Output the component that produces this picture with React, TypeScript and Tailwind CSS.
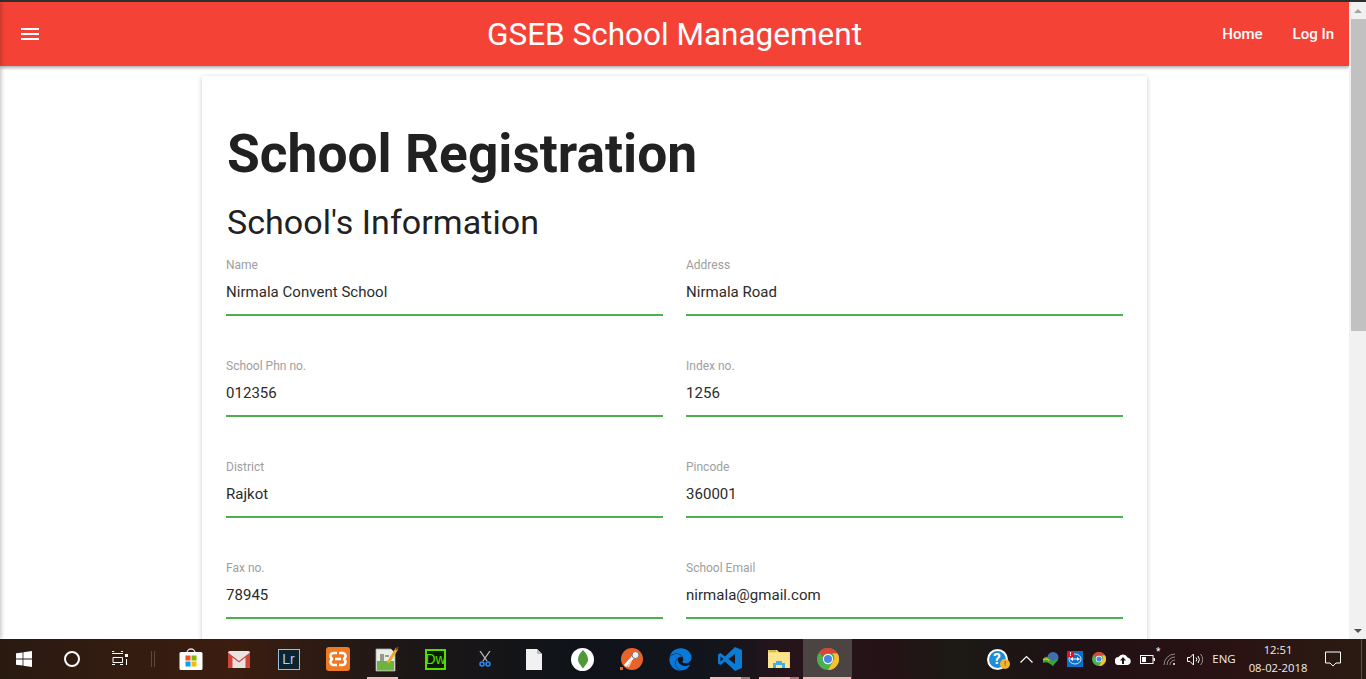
import React from "react";
import { FaEdge } from "react-icons/fa";

const fields = [
  ["Name", "Nirmala Convent School", "Address", "Nirmala Road"],
  ["School Phn no.", "012356", "Index no.", "1256"],
  ["District", "Rajkot", "Pincode", "360001"],
  ["Fax no.", "78945", "School Email", "nirmala@gmail.com"],
];

function Field({ label, value }: { label: string; value: string }) {
  return (
    <div className="flex-1 h-[101px]">
      <div className="text-[12px] leading-[14px] text-[#9e9e9e]">{label}</div>
      <div className="mt-[5px] h-[30px] text-[15px] leading-[30px] text-[#2b2b2b] tracking-[0.03px]">
        {value}
      </div>
      <div className="mt-[7px] h-[2px] bg-[#4caf50]" />
    </div>
  );
}

function Chrome({ size }: { size: number }) {
  return (
    <svg width={size} height={size} viewBox="0 0 24 24">
      <circle cx="12" cy="12" r="12" fill="#4caf50" />
      <path d="M12 0a12 12 0 0 1 10.4 6H12a6 6 0 0 0-5.6 3.8L2.4 4.8A12 12 0 0 1 12 0z" fill="#db4437" />
      <path d="M22.4 6A12 12 0 0 1 12 24l5.2-9a6 6 0 0 0-.6-9z" fill="#fbc02d" />
      <circle cx="12" cy="12" r="5.6" fill="#fff" />
      <circle cx="12" cy="12" r="4.4" fill="#4a86e8" />
    </svg>
  );
}

function Slot({ children, mark, active }: { children: React.ReactNode; mark?: "single" | "double"; active?: boolean }) {
  return (
    <div className={`relative w-[49px] h-full flex items-center justify-center ${active ? "bg-[#4c4443]" : ""}`}>
      {children}
      {mark && (
        <div className="absolute left-[5px] bottom-0 h-[2px] flex w-[40px]">
          <div className="w-[31px] bg-[#f8b5bc]" />
          {mark === "double" && <div className="w-[9px] bg-[#a9767d]" />}
        </div>
      )}
      {active && <div className="absolute left-0 right-[1px] bottom-0 h-[2px] bg-[#f8b5bc]" />}
    </div>
  );
}

function Taskbar() {
  return (
    <div className="h-[40px] shrink-0 flex items-center text-white bg-[linear-gradient(90deg,#291a10_0%,#3c1d10_17%,#1c1716_30%,#0f1319_42%,#12151c_52%,#27141a_58%,#241216_65%,#1b1a14_70%,#1f1115_78%,#2a1212_90%,#2a1c12_100%)]">
      <div className="w-[48px] flex justify-center">
        <svg width="16" height="16" viewBox="0 0 16 16" fill="#fff">
          <path d="M0 2.3 6.6 1.4V7.6H0zM7.4 1.3 16 0V7.6H7.4zM0 8.4H6.6V14.6L0 13.7zM7.4 8.4H16V16L7.4 14.7z" />
        </svg>
      </div>
      <div className="w-[48px] flex justify-center">
        <div className="w-[16px] h-[16px] rounded-full border-[2px] border-white" />
      </div>
      <div className="w-[48px] flex justify-center">
        <svg width="16" height="16" viewBox="0 0 16 16" fill="none" stroke="#fff">
          <path d="M0 .5H2M11 .5H9M2 .5V1M0 2.5H11M1 6.5H10.5V11.5H1ZM0 13.5H3M8 13.5H11" />
          <rect x="13" y="3" width="3" height="3" fill="#fff" stroke="none" />
          <rect x="14" y="8" width="1" height="6" fill="#fff" stroke="none" />
        </svg>
      </div>
      <div className="w-[22px] flex justify-center gap-[2px] pr-[5px]">
        <div className="w-px h-[16px] bg-[#5b4a42]" />
        <div className="w-px h-[16px] bg-[#5b4a42]" />
      </div>
      <Slot>
        <svg width="24" height="24" viewBox="0 0 24 24">
          <path d="M8 6a4 4 0 0 1 8 0" fill="none" stroke="#ddd" strokeWidth="1.4" />
          <rect x="0.5" y="5" width="23" height="18" rx="1.5" fill="#fff" />
          <rect x="6.5" y="8.5" width="5" height="5" fill="#f25022" />
          <rect x="12.5" y="8.5" width="5" height="5" fill="#7fba00" />
          <rect x="6.5" y="14.5" width="5" height="5" fill="#00a4ef" />
          <rect x="12.5" y="14.5" width="5" height="5" fill="#ffb900" />
        </svg>
      </Slot>
      <Slot>
        <svg width="22" height="17" viewBox="0 0 22 17" className="mr-[1px]">
          <rect width="22" height="17" rx="1.5" fill="#e8e3e0" />
          <path d="M0 1.5 11 10 22 1.5V15.5a1.5 1.5 0 0 1-1.5 1.5H17.5V6.5L11 11.5 4.500 6.500V17H1.500A1.500 1.500 0 0 1 0 15.500z" fill="#d2443a" />
        </svg>
      </Slot>
      <Slot>
        <div className="w-[22px] h-[21px] bg-[#0c2330] border border-[#9cc0da] flex items-center justify-center text-[14px] leading-none text-[#a9d2ee] font-['Liberation_Sans',sans-serif]">
          Lr
        </div>
      </Slot>
      <Slot>
        <div className="w-[24px] h-[24px] rounded-[3px] bg-[#ee7a24] flex items-center justify-center">
          <svg width="18" height="16" viewBox="0 0 18 16" fill="none" stroke="#fff" strokeWidth="2.600">
            <path d="M8 2H5a2.500 2.500 0 0 0-1 6 2.500 2.500 0 0 0 1 6H8M10 2H13a2.500 2.500 0 0 1 1 6 2.500 2.500 0 0 1-1 6H10M6 8H12" />
          </svg>
        </div>
      </Slot>
      <Slot mark="single">
        <svg width="24" height="25" viewBox="0 0 24 25">
          <path d="M1 2H16L20 6V24H1Z" fill="#e9efe4" stroke="#aaa" strokeWidth="0.8" />
          <rect x="2" y="14" width="17" height="9.500" fill="#6cb33f" />
          <path d="M6 7V14M8 7V14M10 9H14" stroke="#444" strokeWidth="1" />
          <path d="M13 16 22 1.500" stroke="#e8a92c" strokeWidth="3" />
          <path d="M21 3 23 0" stroke="#8b3a2a" strokeWidth="2" />
        </svg>
      </Slot>
      <Slot>
        <div className="w-[21px] h-[21px] bg-[#0b1a05] border-2 border-[#52e000] flex items-center justify-center text-[14px] leading-none text-[#52e000] font-['Liberation_Sans',sans-serif]">
          Dw
        </div>
      </Slot>
      <Slot>
        <svg width="12" height="16" viewBox="0 0 12 16" fill="none">
          <path d="M1 0 8 10M11 0 4 10" stroke="#bbb" strokeWidth="1.300" />
          <circle cx="3" cy="13" r="2" stroke="#1e90ff" strokeWidth="1.500" />
          <circle cx="9" cy="13" r="2" stroke="#1e90ff" strokeWidth="1.500" />
        </svg>
      </Slot>
      <Slot>
        <svg width="16" height="21" viewBox="0 0 16 21">
          <path d="M0 0H11L16 5V21H0Z" fill="#f1f1f1" />
          <path d="M11 0V5H16Z" fill="#bbb" />
        </svg>
      </Slot>
      <Slot>
        <div className="w-[23px] h-[23px] rounded-full bg-white flex items-center justify-center">
          <svg width="10" height="18" viewBox="0 0 10 18">
            <path d="M5 0C8 3 10 6 10 9.500 10 13 7 15 5.500 18H4.500C3 15 0 13 0 9.500 0 6 2 3 5 0Z" fill="#4e9a3a" />
          </svg>
        </div>
      </Slot>
      <Slot>
        <svg width="23" height="23" viewBox="0 0 23 23">
          <circle cx="12" cy="11" r="11" fill="#e8622a" />
          <rect x="0" y="19" width="3" height="3" fill="#e8622a" />
          <path d="M5 18 14 8" stroke="#fff" strokeWidth="3" />
          <circle cx="15.500" cy="7" r="3.500" fill="#eee" stroke="#777" strokeWidth="1" />
          <path d="M8 19 11 13" stroke="#f6c9b0" strokeWidth="2" />
        </svg>
      </Slot>
      <Slot>
        <FaEdge size={23} color="#0a78d7" />
      </Slot>
      <Slot mark="double">
        <svg width="24" height="24" viewBox="0 0 24 24" fill="#0a7cd6" fillRule="evenodd">
          <path d="M17 0 7 9.500 2.500 6 0 7.500V16.500L2.500 18 7 14.500 17 24 24 21V3ZM17 7V17L10.500 12ZM2.500 9.500 5.500 12 2.500 14.500Z" />
        </svg>
      </Slot>
      <Slot mark="double">
        <svg width="22" height="18" viewBox="0 0 22 18">
          <path d="M0 0H9L11 2H22V18H0Z" fill="#f5d76e" />
          <rect x="0" y="3" width="21" height="15" fill="#fde58f" />
          <path d="M1 1H8" stroke="#7fb04a" strokeWidth="1" />
          <path d="M5 18V13H8V11H14V13H17V18H14V15H8V18Z" fill="#3fb0e8" />
        </svg>
      </Slot>
      <Slot active>
        <Chrome size={22} />
      </Slot>
      <div className="flex-1" />
      <div className="w-[24px] flex justify-center relative">
        <div className="w-[21px] h-[21px] rounded-full bg-[#1e8fd5] border-2 border-white flex items-center justify-center text-[15px] font-bold leading-none">
          ?
        </div>
        <div className="absolute left-[15px] top-[10px] w-[10px] h-[10px] rounded-full bg-[#f2b233] flex items-center justify-center text-[8px] leading-none text-[#6b4a00]">
          !
        </div>
      </div>
      <div className="w-[34px] flex justify-center">
        <svg width="13" height="8" viewBox="0 0 13 8" fill="none" stroke="#fff" strokeWidth="1.200">
          <path d="M.5 7.500 6.500 1.500 12.500 7.500" />
        </svg>
      </div>
      <div className="w-[16px] flex justify-center">
        <svg width="16" height="14" viewBox="0 0 16 14">
          <circle cx="10" cy="5.500" r="5.500" fill="#3f6fae" />
          <path d="M0 7C3 3 6 5 9 9L15 7 10 14C6 11 3 9 0 11Z" fill="#35a83a" />
          <path d="M0 8C3 6 5 7 6 9" stroke="#f2b233" strokeWidth="1.500" fill="none" />
        </svg>
      </div>
      <div className="w-[32px] flex justify-center">
        <svg width="16" height="16" viewBox="0 0 16 16">
          <rect width="16" height="16" fill="#0e6fc5" />
          <path d="M3 8 6 6V7.500H10V6L13 8 10 10V8.500H6V10Z" fill="#fff" />
          <ellipse cx="8" cy="8" rx="6" ry="5" fill="none" stroke="#fff" strokeWidth="0.800" />
          <rect width="7" height="6" fill="#e81123" />
          <rect x="3" y="1" width="1" height="2.500" fill="#fff" />
          <rect x="3" y="4" width="1" height="1" fill="#fff" />
        </svg>
      </div>
      <div className="w-[16px] flex justify-center">
        <Chrome size={14} />
      </div>
      <div className="w-[32px] flex justify-center">
        <svg width="16" height="11" viewBox="0 0 16 11">
          <path d="M4 11A4 4 0 0 1 3.500 3 5 5 0 0 1 12.500 3.500 3.800 3.800 0 0 1 12.500 11Z" fill="#fff" />
          <path d="M8 3 11 6.500H9V10H7V6.500H5Z" fill="#2a1212" />
        </svg>
      </div>
      <div className="w-[16px] flex justify-center">
        <svg width="15" height="9" viewBox="0 0 15 9">
          <rect x=".5" y=".5" width="12.500" height="8" fill="none" stroke="#fff" />
          <rect x="2" y="2" width="4" height="5" fill="#fff" />
          <rect x="13.500" y="3" width="1.500" height="3" fill="#fff" />
        </svg>
      </div>
      <div className="w-[31px] flex justify-center relative">
        <svg width="15" height="13" viewBox="0 0 15 13" fill="none" stroke="#8f8a86" strokeWidth="1">
          <path d="M1 12A11 11 0 0 1 12 1M4 12A8 8 0 0 1 12 4M7 12A5 5 0 0 1 12 7" />
          <circle cx="11" cy="11" r="1" fill="#fff" stroke="none" />
        </svg>
        <span className="absolute left-[1px] top-[-7px] text-[10px] leading-[12px] text-white">*</span>
      </div>
      <div className="w-[17px] flex justify-center">
        <svg width="16" height="13" viewBox="0 0 16 13" fill="none" stroke="#fff" strokeWidth="1">
          <path d="M.5 4.500H3L6.500 1V12L3 8.500H.5Z" />
          <path d="M9 4.500A3 3 0 0 1 9 8.500M11 3A5.500 5.500 0 0 1 11 10" />
          <path d="M13.500 1A8 8 0 0 1 13.500 12" stroke="#99928c" />
        </svg>
      </div>
      <div className="w-[44px] text-center text-[11.5px] text-[#f0eeec] font-['Open_Sans',sans-serif] ml-[-1px] mr-[-2px]">ENG</div>
      <div className="w-[68px] flex flex-col items-center text-[11.25px] leading-[18px] text-[#f0eeec] font-['Open_Sans',sans-serif] mt-[-1px]">
        <span>12:51</span>
        <span>08-02-2018</span>
      </div>
      <div className="w-[42px] flex justify-center mr-[7px]">
        <svg width="16" height="16" viewBox="0 0 16 16" fill="none" stroke="#fff" strokeWidth="1">
          <path d="M.5 1H15.500V12H11L8 15 5 12H.5Z" />
        </svg>
      </div>
      <div className="w-px h-full bg-[#5a4f48]" />
      <div className="w-[4px]" />
    </div>
  );
}

function Scrollbar() {
  return (
    <div className="w-[17px] shrink-0 bg-[#f1f1f1] flex flex-col items-end">
      <div className="w-full h-[17px] flex items-center justify-center">
        <div className="w-0 h-0 border-x-[4px] border-x-transparent border-b-[4px] border-b-[#a3a3a3]" />
      </div>
      <div className="w-[15px] h-[312px] bg-[#c1c1c1]" />
      <div className="flex-1" />
      <div className="w-full h-[17px] flex items-center justify-center">
        <div className="w-0 h-0 border-x-[4px] border-x-transparent border-t-[4px] border-t-[#505050]" />
      </div>
    </div>
  );
}

export default function App() {
  return (
    <div className="h-[679px] flex flex-col overflow-hidden bg-white font-['Roboto',sans-serif]">
      <div className="h-[2px] shrink-0 bg-[#2e2e2e]" />
      <div className="flex flex-1 min-h-0">
        <div className="flex-1 min-w-0 flex flex-col relative overflow-hidden">
          <div className="absolute left-[-3px] top-0 bottom-0 w-[3px] shadow-[0_0_5px_rgba(0,0,0,0.45)] z-20" />
          <nav className="relative z-10 h-[64px] shrink-0 bg-[#f44336] text-white flex items-center shadow-[0_2px_3px_rgba(0,0,0,0.3)]">
            <div className="absolute left-[21px] top-[26px]">
              <svg width="18" height="12" viewBox="0 0 18 12" fill="#fff" className="block">
                <rect width="18" height="2" />
                <rect y="5" width="18" height="2" />
                <rect y="10" width="18" height="2" />
              </svg>
            </div>
            <div className="flex-1 text-center text-[31.5px] leading-[64px] pt-[1px]">GSEB School Management</div>
            <div className="absolute right-0 top-0 h-full flex items-center text-[15px] font-medium">
              <span className="px-[15px]">Home</span>
              <span className="px-[15px]">Log In</span>
            </div>
          </nav>
          <div className="flex-1 min-h-0 flex justify-center pt-[10px]">
            <div className="w-[945px] h-[700px] shrink-0 bg-white px-[24px] rounded-[2px] shadow-[0_1px_5px_rgba(0,0,0,0.22)]">
              <h1 className="mt-[44px] ml-[1px] text-[53.3px] leading-[68px] font-bold text-[#212121]">School Registration</h1>
              <h2 className="mt-[13px] ml-[1px] text-[34px] leading-[42px] tracking-[0.05px] text-[#212121]">School's Information</h2>
              <div className="mt-[15px] flex flex-col">
                {fields.map((row) => (
                  <div key={row[0]} className="flex gap-[23px]">
                    <Field label={row[0]} value={row[1]} />
                    <Field label={row[2]} value={row[3]} />
                  </div>
                ))}
              </div>
            </div>
          </div>
        </div>
        <Scrollbar />
      </div>
      <Taskbar />
    </div>
  );
}
